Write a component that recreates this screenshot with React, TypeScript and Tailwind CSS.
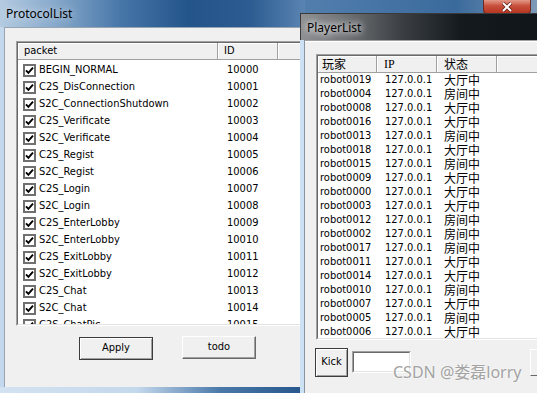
import React from 'react'

const protocols: [string, string][] = [
  ['BEGIN_NORMAL', '10000'],
  ['C2S_DisConnection', '10001'],
  ['S2C_ConnectionShutdown', '10002'],
  ['C2S_Verificate', '10003'],
  ['S2C_Verificate', '10004'],
  ['C2S_Regist', '10005'],
  ['S2C_Regist', '10006'],
  ['C2S_Login', '10007'],
  ['S2C_Login', '10008'],
  ['C2S_EnterLobby', '10009'],
  ['S2C_EnterLobby', '10010'],
  ['C2S_ExitLobby', '10011'],
  ['S2C_ExitLobby', '10012'],
  ['C2S_Chat', '10013'],
  ['S2C_Chat', '10014'],
  ['C2S_ChatPic', '10015'],
]

const players: [string, string][] = [
  ['robot0019', '大厅中'],
  ['robot0004', '房间中'],
  ['robot0008', '大厅中'],
  ['robot0016', '大厅中'],
  ['robot0013', '房间中'],
  ['robot0018', '大厅中'],
  ['robot0015', '房间中'],
  ['robot0009', '大厅中'],
  ['robot0000', '大厅中'],
  ['robot0003', '大厅中'],
  ['robot0012', '房间中'],
  ['robot0002', '房间中'],
  ['robot0017', '房间中'],
  ['robot0011', '大厅中'],
  ['robot0014', '大厅中'],
  ['robot0010', '房间中'],
  ['robot0007', '大厅中'],
  ['robot0005', '房间中'],
  ['robot0006', '大厅中'],
]

function CheckBox() {
  return (
    <span className="flex h-[13px] w-[13px] shrink-0 items-center justify-center border-2 border-[#707070] bg-white">
      <svg width="9" height="9" viewBox="0 0 9 9">
        <path d="M1 4.3 3.4 6.8 8 1.6" fill="none" stroke="#000" strokeWidth="1.9" />
      </svg>
    </span>
  )
}

function HeadCell({ w, pl, children }: { w?: string; pl: string; children?: React.ReactNode }) {
  return (
    <div className={`flex h-full shrink-0 items-center border-b border-r border-[#a0a0a0] bg-[#f0f0f0] shadow-[inset_1px_1px_0_#ffffff] ${w ?? 'flex-1'} ${pl}`}>
      {children}
    </div>
  )
}

export default function App() {
  return (
    <div className="relative h-[393px] w-[537px] overflow-hidden bg-[linear-gradient(90deg,#6f95bd_0%,#4f7cab_60%,#3a6a9c_85%,#7d99b8_100%)] font-['DejaVu_Sans_Condensed','DejaVu_Sans','Noto_Sans_CJK_SC',sans-serif] text-[11px] text-black [font-stretch:condensed]">
      {/* close button of the window behind */}
      <div className="absolute left-[483px] top-0 flex h-[14px] w-[48px] items-center justify-center rounded-b-[4px] border border-t-0 border-[#6b2a22] bg-[linear-gradient(180deg,#e39a8a_0%,#c8503c_45%,#b73520_100%)]">
        <svg width="12" height="10" viewBox="0 0 12 10">
          <path d="M2 1 10 9 M10 1 2 9" stroke="#5a1a12" strokeWidth="3.4" />
          <path d="M2 1 10 9 M10 1 2 9" stroke="#ffffff" strokeWidth="2" />
        </svg>
      </div>

      {/* ProtocolList window */}
      <div className="absolute left-0 top-0 flex h-[393px] w-[305px] flex-col">
        <div className="flex h-[27px] shrink-0 items-center bg-[linear-gradient(90deg,#b4cbe1_0%,#87a9cb_18%,#4676a8_40%,#23548a_62%,#2c5c91_82%,#5a84b2_100%)] pl-[6px] font-['Noto_Sans',sans-serif] text-[12px] [font-stretch:normal] [text-shadow:0_0_8px_rgba(255,255,255,0.8)]">
          ProtocolList
        </div>
        <div className="flex flex-1">
          <div className="w-[4px] shrink-0 bg-[#c3d8ec]" />
          <div className="flex min-w-0 flex-1 flex-col border-l border-t border-[#97a4b2] bg-[#f0f0f0]">
            <div className="ml-[11px] mt-[13px] h-[285px] w-[290px] shrink-0 border border-[#a0a0a0] border-b-white border-r-white">
              <div className="flex h-full flex-col overflow-hidden border border-[#696969] border-b-[#e3e3e3] border-r-[#e3e3e3] bg-white">
                <div className="flex h-[17px] shrink-0">
                  <HeadCell w="w-[200px]" pl="pl-[6px]">packet</HeadCell>
                  <HeadCell w="w-[60px]" pl="pl-[6px]">ID</HeadCell>
                  <HeadCell pl="pl-[6px]" />
                </div>
                <div className="flex flex-col pt-[2px]">
                  {protocols.map(([name, id]) => (
                    <div key={id} className="flex h-[17px] shrink-0 items-center">
                      <div className="flex w-[200px] shrink-0 items-center gap-[3px] pl-[5px]">
                        <CheckBox />
                        <span>{name}</span>
                      </div>
                      <div className="pl-[9px]">{id}</div>
                    </div>
                  ))}
                </div>
              </div>
            </div>
            <div className="mt-[11px] flex">
              <button className="ml-[74px] flex h-[23px] w-[74px] shrink-0 items-center justify-center border border-[#3c3c3c] bg-[#f0f0f0] shadow-[inset_1px_1px_0_#ffffff,inset_-1px_-1px_0_#a0a0a0]">
                Apply
              </button>
              <button className="ml-[29px] mt-[-1px] flex h-[23px] w-[74px] shrink-0 items-center justify-center border border-white border-b-[#696969] border-r-[#696969] bg-[#f0f0f0] shadow-[inset_-1px_-1px_0_#a0a0a0]">
                todo
              </button>
            </div>
          </div>
        </div>
        <div className="h-[6px] shrink-0 bg-[linear-gradient(90deg,#d3e2f1_0%,#c4d8ec_45%,#4a79a9_72%,#26568b_100%)]" />
      </div>

      {/* PlayerList window */}
      <div className="absolute left-[300px] top-[13px] flex h-[400px] w-[320px] flex-col">
        <div className="flex h-[27px] shrink-0 items-center border-l border-t border-[#3a3a3a] bg-[linear-gradient(90deg,#8e9092_0%,#74777a_12%,#3a3e42_32%,#141a1e_50%,#0b1014_100%)] pl-[6px] pt-[2px] font-['Noto_Sans',sans-serif] text-[12px] [font-stretch:normal] [text-shadow:0_0_6px_#ffffff,0_0_10px_#ffffff]">
          PlayerList
        </div>
        <div className="flex flex-1">
          <div className="w-[5px] shrink-0 border-r border-[#8894a0] bg-[#cde1f4]" />
          <div className="flex min-w-0 flex-1 flex-col border-t border-[#a0a0a0] bg-[#f0f0f0] shadow-[inset_0_1px_0_#ffffff]">
            <div className="ml-[11px] mt-[13px] h-[286px] w-[260px] shrink-0 border border-[#a0a0a0] border-b-white border-r-white">
              <div className="flex h-full flex-col overflow-hidden border border-[#696969] border-b-[#e3e3e3] border-r-[#e3e3e3] bg-white">
                <div className="flex h-[17px] shrink-0 font-['Noto_Sans_CJK_SC',sans-serif] text-[12px]">
                  <HeadCell w="w-[59px]" pl="pl-[4px]">玩家</HeadCell>
                  <HeadCell w="w-[60px]" pl="pl-[7px]">
                    <span className="font-['Liberation_Serif',serif]">IP</span>
                  </HeadCell>
                  <HeadCell w="w-[60px]" pl="pl-[7px]">状态</HeadCell>
                  <HeadCell pl="pl-[6px]" />
                </div>
                <div className="flex flex-col">
                  {players.map(([name, state]) => (
                    <div key={name} className="flex h-[14px] shrink-0 items-center leading-[14px]">
                      <div className="w-[59px] shrink-0 pl-[2px]">{name}</div>
                      <div className="w-[60px] shrink-0 pl-[8px]">127.0.0.1</div>
                      <div className="pl-[7px] font-['Noto_Sans_CJK_SC',sans-serif] text-[12px] leading-[14px]">{state}</div>
                    </div>
                  ))}
                </div>
              </div>
            </div>
            <div className="ml-[10px] mt-[8px] flex items-start">
              <button className="flex h-[29px] w-[33px] shrink-0 items-center justify-center border border-[#3c3c3c] bg-[#f0f0f0] shadow-[inset_1px_1px_0_#ffffff,inset_-1px_-1px_0_#a0a0a0]">
                Kick
              </button>
              <div className="ml-[4px] mt-[3px] h-[22px] w-[59px] shrink-0 border border-[#a0a0a0] border-b-white border-r-white">
                <div className="h-full w-full border border-[#696969] border-b-[#e3e3e3] border-r-[#e3e3e3] bg-white" />
              </div>
              <button className="ml-[119px] mt-[1px] h-[27px] w-[40px] shrink-0 border border-white border-b-[#696969] border-r-[#696969] bg-[#f0f0f0]" />
            </div>
          </div>
        </div>
      </div>

      {/* watermark */}
      <div className="absolute left-[393px] top-[362px] font-['Noto_Sans','Noto_Sans_CJK_SC',sans-serif] text-[16px] leading-[20px] text-[#a3a3a3] [font-stretch:normal] [text-shadow:0_0_2px_#ffffff]">
        CSDN @娄磊lorry
      </div>
    </div>
  )
}
